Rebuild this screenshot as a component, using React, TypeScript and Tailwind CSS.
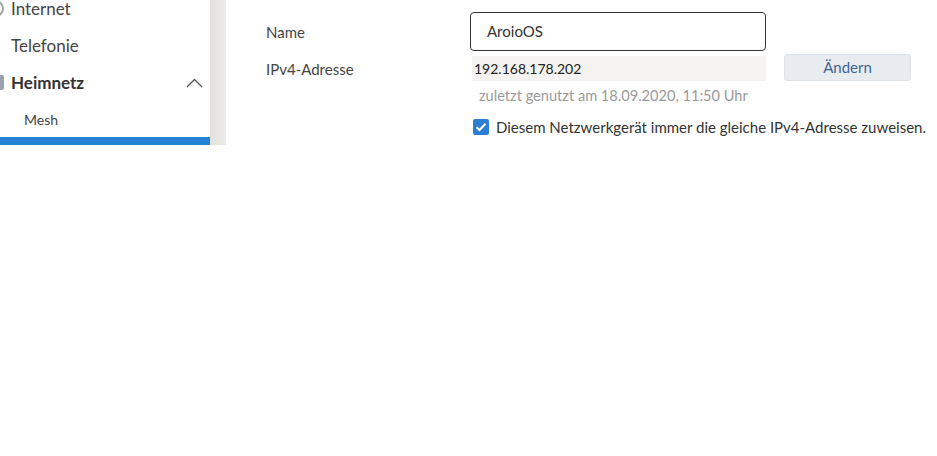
import React from "react";

export default function App() {
  const font = { fontFamily: "Lato, 'Open Sans', sans-serif" };
  return (
    <div className="w-[937px] h-[456px] bg-white overflow-hidden" style={font}>
      <div className="flex h-[145px] overflow-hidden">
        {/* Sidebar */}
        <div className="w-[210px] shrink-0 flex flex-col bg-white">
          <div className="mt-[-10px] flex flex-col">
            <div className="h-[37px] flex items-center text-[17px] text-[#444]">
              <span className="ml-[-13px] mr-[7px] w-[17px] h-[17px] rounded-full border-2 border-[#a5a5a5]" />
              <span>Internet</span>
            </div>
            <div className="h-[37px] flex items-center pl-[11px] text-[17px] text-[#444]">
              Telefonie
            </div>
            <div className="h-[37px] flex items-center text-[17px] font-bold text-[#333]">
              <span className="ml-[-13px] mr-[7px] w-[17px] h-[15px] rounded-[2px] bg-[#9aa3ad]" />
              <span className="flex-1">Heimnetz</span>
              <svg width="17" height="10" viewBox="0 0 17 10" className="mr-[7px]">
                <path d="M1 9 L8.5 1.5 L16 9" fill="none" stroke="#555" strokeWidth="1.3" />
              </svg>
            </div>
            <div className="h-[36px] flex items-center pl-[24px] text-[14px] text-[#444]">
              Mesh
            </div>
            <div className="h-[37px] bg-[#2382d4]" />
          </div>
        </div>
        {/* Gray band */}
        <div className="w-[16px] shrink-0 bg-gradient-to-r from-[#e2e0dc] to-[#efedea]" />
        {/* Main */}
        <div className="flex-1 pl-[40px] pt-[12px]">
          <div className="flex items-center h-[39px]">
            <div className="w-[204px] text-[15px] text-[#444] pt-[2px]">Name</div>
            <div className="w-[296px] h-[39px] border border-[#333] rounded-[4px] flex items-center pl-[16px] text-[15px] text-[#333]">
              AroioOS
            </div>
          </div>
          <div className="flex items-center mt-[3px] h-[27px]">
            <div className="w-[206px] text-[15px] text-[#444] pt-[3px]">IPv4-Adresse</div>
            <div className="w-[294px] h-[25px] mt-[2px] bg-[#f4f3f1] flex items-center pl-[2px] text-[14px] text-[#222]">
              192.168.178.202
            </div>
            <div className="ml-[18px] w-[127px] h-[27px] rounded-[3px] bg-[#e8ecf0] border border-[#dde2e7] flex items-center justify-center text-[15px] text-[#3f6396]">
              Ändern
            </div>
          </div>
          <div className="ml-[213px] mt-[5px] text-[14.6px] text-[#9a9a9a] leading-[20px]">
            zuletzt genutzt am 18.09.2020, 11:50 Uhr
          </div>
          <div className="ml-[207px] mt-[10px] flex items-center">
            <span className="w-[16px] h-[16px] rounded-[2px] bg-[#2b7fd3] flex items-center justify-center">
              <svg width="12" height="10" viewBox="0 0 12 10">
                <path d="M1.5 5.2 L4.5 8 L10.5 1.8" fill="none" stroke="white" strokeWidth="2" />
              </svg>
            </span>
            <span className="ml-[7px] text-[15px] text-[#333]">
              Diesem Netzwerkgerät immer die gleiche IPv4-Adresse zuweisen.
            </span>
          </div>
        </div>
      </div>
    </div>
  );
}
